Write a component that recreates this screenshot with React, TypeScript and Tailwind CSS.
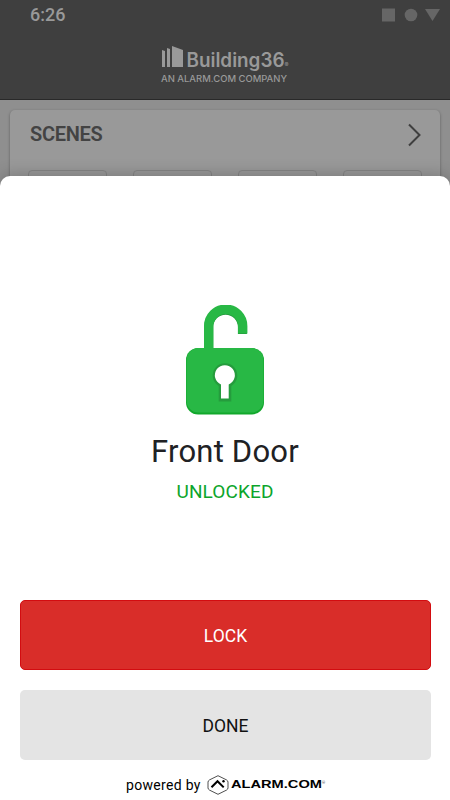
const sceneTiles = ["home", "away", "sleep", "wake"];

function Building36Logo() {
    return (
        <svg width="134" height="42" viewBox="0 0 134 42" fill="#999999" className="font-['Inter',sans-serif]">
            <path d="M4 5l3 1v16H4zM9 3l3 1V22H9zM14 1l11 4v17H14z" />
            <text x="28.5" y="22" fontSize="19.5" fontWeight="600" textLength="98" lengthAdjust="spacingAndGlyphs">Building36</text>
            <text x="126.500" y="22" fontSize="6">®</text>
            <text x="3" y="37" fontSize="9" fontWeight="500" textLength="126" lengthAdjust="spacingAndGlyphs">AN ALARM.COM COMPANY</text>
        </svg>
    );
}

function UnlockedIcon() {
    return (
        <svg width="78" height="110" viewBox="0 0 78 110">
            <path d="M22.7 44V22.2a16.8 17 0 0 1 33.7 0V29" fill="none" stroke="#20953a" strokeWidth="9" />
            <path d="M22.7 44V21.2a17 17 0 0 1 34 0V28.5" fill="none" stroke="#28b845" strokeWidth="9.4" />
            <rect x="0" y="43" width="78" height="66.5" rx="12" fill="#12a82c" />
            <rect x="0.5" y="43" width="77" height="64.5" rx="12" fill="#28b845" />
            <path d="M32.7 81a12.300 12.300 0 1 1 12.6 0V96.500H32.7z" fill="#259c3d" />
            <path d="M35 79.4a10 10 0 1 1 7.7 0V93.5H35z" fill="#ffffff" />
        </svg>
    );
}

function AlarmLogo() {
    return (
        <svg width="120" height="20" viewBox="0 0 120 20">
            <path d="M11 .7l8.500 4.200q1.500.9 1.500 2.200v5.800q0 1.300-1.500 2.200L11 19.300l-8.500-4.200Q1 14.200 1 12.900V7.100q0-1.300 1.500-2.200z" fill="none" stroke="#222222" strokeWidth="0.8" />
            <path d="M4.500 12.200L10.500 6.200l6.200 6.200" fill="none" stroke="#000000" strokeWidth="2" />
            <circle cx="16.500" cy="6.200" r="1.200" />
            <text x="24" y="13.200" fontSize="11" fontWeight="700" textLength="91" lengthAdjust="spacingAndGlyphs" className="font-['Liberation_Sans',sans-serif]">ALARM.COM</text>
            <text x="115" y="9" fontSize="4" fill="#555555">®</text>
        </svg>
    );
}

export default function App() {
    return (
        <div className="relative h-[800px] w-[450px] overflow-hidden bg-[#8f8f8f] font-['Roboto',sans-serif]">
            <header className="h-[100px] border-b border-[#292929] bg-[#3f3f3f]">
                <div className="flex h-[30px] items-center justify-between pl-[30px] pr-2.5">
                    <span className="text-[18px] font-medium leading-[30px] text-[#999999]">6:26</span>
                    <svg width="58" height="14" viewBox="0 0 58 14" fill="#666666">
                        <path d="M0 .5h13v13H0z" />
                        <circle cx="29" cy="7" r="6.300" />
                        <path d="M43 1h15l-7.500 12z" />
                    </svg>
                </div>
                <div className="flex justify-center pt-[15px]">
                    <Building36Logo />
                </div>
            </header>

            <section className="mx-2.5 mt-2.5 h-[100px] rounded-[5px] bg-[#999999] px-[18px] shadow-[0_1px_3px_rgba(0,0,0,0.35)]">
                <div className="flex h-[60px] items-start justify-between pl-0.5 pt-3">
                    <h2 className="text-[20px] font-semibold leading-[25px] tracking-[-0.3px] text-[#434343]">SCENES</h2>
                    <svg width="16" height="26" viewBox="0 0 16 26" className="-mr-px" fill="none" stroke="#3f3f3f" strokeWidth="2">
                        <path d="M2 2.500l10.500 10.500L2 23.500" />
                    </svg>
                </div>
                <div className="flex justify-between">
                    {sceneTiles.map((tile) => (
                        <div key={tile} className="h-10 w-[79px] rounded-[4px] border border-[#858585]" />
                    ))}
                </div>
            </section>

            {/* Door control sheet, slides over the dimmed dashboard */}
            <main className="absolute inset-x-0 bottom-0 flex h-[624px] flex-col items-center rounded-t-[10px] bg-white px-5 pt-[129px] shadow-[0_-2px_16px_rgba(0,0,0,0.2)]">
                <UnlockedIcon />
                <h1 className="mt-[19px] text-[31px] font-[450] leading-[36px] tracking-[0.2px] text-[#202124]">Front Door</h1>
                <p className="mt-[10px] text-[19px] font-[450] leading-6 tracking-[0.1px] text-[#0ca52b]">UNLOCKED</p>
                <div className="mt-24 flex w-full flex-col gap-5 pr-px *:w-[411px]">
                    <button className="h-[70px] rounded-[5px] border border-[#d30c10] bg-[#d92d29] pt-0.5 text-[17.5px] font-[450] text-white">LOCK</button>
                    <button className="h-[70px] rounded-[5px] bg-[#e4e4e4] pt-0.5 text-[17.5px] font-[450] text-[#111111]">DONE</button>
                </div>
                <footer className="mt-[15px] flex h-5 w-full items-center gap-1.5 pl-[106px]">
                    <span className="text-[14px] leading-5 tracking-[0.32px] text-black">powered by</span>
                    <AlarmLogo />
                </footer>
            </main>
        </div>
    );
}
